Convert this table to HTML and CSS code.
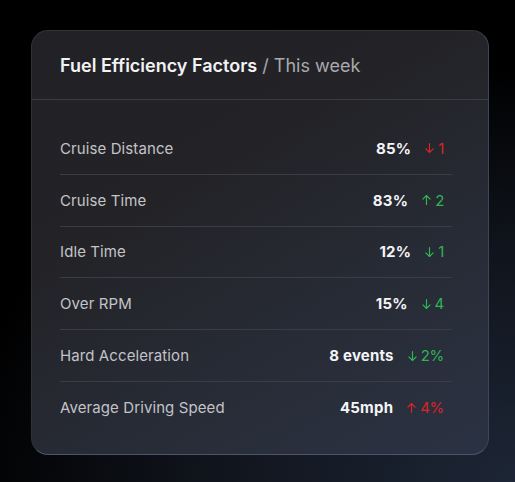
FILE: index.html
```html
<!DOCTYPE html>
<html>
<head>
<meta charset="utf-8">
<link rel="stylesheet" href="styles.css">
</head>
<body>
<div class="stage">
  <section class="card">
    <header class="card-head">
      <h1 class="title"><span class="title-main">Fuel Efficiency Factors</span><span class="title-sub"> / This week</span></h1>
    </header>
    <ul class="rows">
      <li class="row">
        <span class="label">Cruise Distance</span>
        <span class="value">85%</span>
        <span class="trend bad"><svg class="arrow" viewBox="0 0 10 12"><path d="M5 1V11M1 7L5 11L9 7"/></svg>1</span>
      </li>
      <li class="row">
        <span class="label">Cruise Time</span>
        <span class="value">83%</span>
        <span class="trend good"><svg class="arrow" viewBox="0 0 10 12"><path d="M5 11V1M1 5L5 1L9 5"/></svg>2</span>
      </li>
      <li class="row">
        <span class="label">Idle Time</span>
        <span class="value">12%</span>
        <span class="trend good"><svg class="arrow" viewBox="0 0 10 12"><path d="M5 1V11M1 7L5 11L9 7"/></svg>1</span>
      </li>
      <li class="row">
        <span class="label">Over RPM</span>
        <span class="value">15%</span>
        <span class="trend good"><svg class="arrow" viewBox="0 0 10 12"><path d="M5 1V11M1 7L5 11L9 7"/></svg>4</span>
      </li>
      <li class="row">
        <span class="label">Hard Acceleration</span>
        <span class="value">8 events</span>
        <span class="trend good"><svg class="arrow" viewBox="0 0 10 12"><path d="M5 1V11M1 7L5 11L9 7"/></svg>2%</span>
      </li>
      <li class="row">
        <span class="label">Average Driving Speed</span>
        <span class="value">45mph</span>
        <span class="trend bad"><svg class="arrow" viewBox="0 0 10 12"><path d="M5 11V1M1 5L5 1L9 5"/></svg>4%</span>
      </li>
    </ul>
  </section>
</div>
</body>
</html>
```

FILE: styles.css
```css
* { box-sizing: border-box; }
html, body { margin: 0; padding: 0; }
body {
  width: 515px;
  height: 482px;
  overflow: hidden;
  font-family: Inter, "Noto Sans", sans-serif;
  background: radial-gradient(ellipse 560px 420px at 100% 100%, #1d2636 0%, #10141c 55%, #000 100%);
}
.stage {
  padding: 30px 26px 0 31px;
}
.card {
  width: 458px;
  height: 425px;
  border-radius: 17px;
  border: 1px solid #33343a;
  border-color: #333338 #3f4658 #4a5571 #313136;
  background: linear-gradient(150deg, #222226 0%, #232327 35%, #272b35 65%, #2b3243 100%);
}
.card-head {
  height: 69px;
  border-bottom: 1px solid #3b3c42;
  display: flex;
  align-items: center;
  padding: 2px 28px 0;
}
.title {
  margin: 0;
  font-size: 18px;
  line-height: 22px;
  font-weight: 400;
  letter-spacing: 0;
}
.title-main { color: #f2f2f4; font-weight: 600; }
.title-sub { color: #a9a9ae; }
.rows {
  list-style: none;
  margin: 0;
  padding: 23px 36px 0 28px;
}
.row {
  display: flex;
  align-items: center;
  height: 51.8px;
  padding-right: 8px;
  border-bottom: 1px solid #3c3d44;
  font-size: 15px;
}
.row:last-child { border-bottom: none; }
.label {
  flex: 1;
  color: #c3c3c8;
  letter-spacing: 0.1px;
}
.value {
  color: #f4f4f6;
  font-weight: 700;
  margin-right: 14px;
  letter-spacing: 0.2px;
}
.trend {
  display: inline-flex;
  align-items: center;
  gap: 4px;
  font-size: 15px;
  font-weight: 400;
  letter-spacing: -0.3px;
}
.arrow {
  width: 9px;
  height: 12px;
  fill: none;
  stroke: currentColor;
  stroke-width: 1.3;
  stroke-linecap: round;
  stroke-linejoin: round;
}
.bad { color: #dd2424; }
.good { color: #2fb552; }
```
